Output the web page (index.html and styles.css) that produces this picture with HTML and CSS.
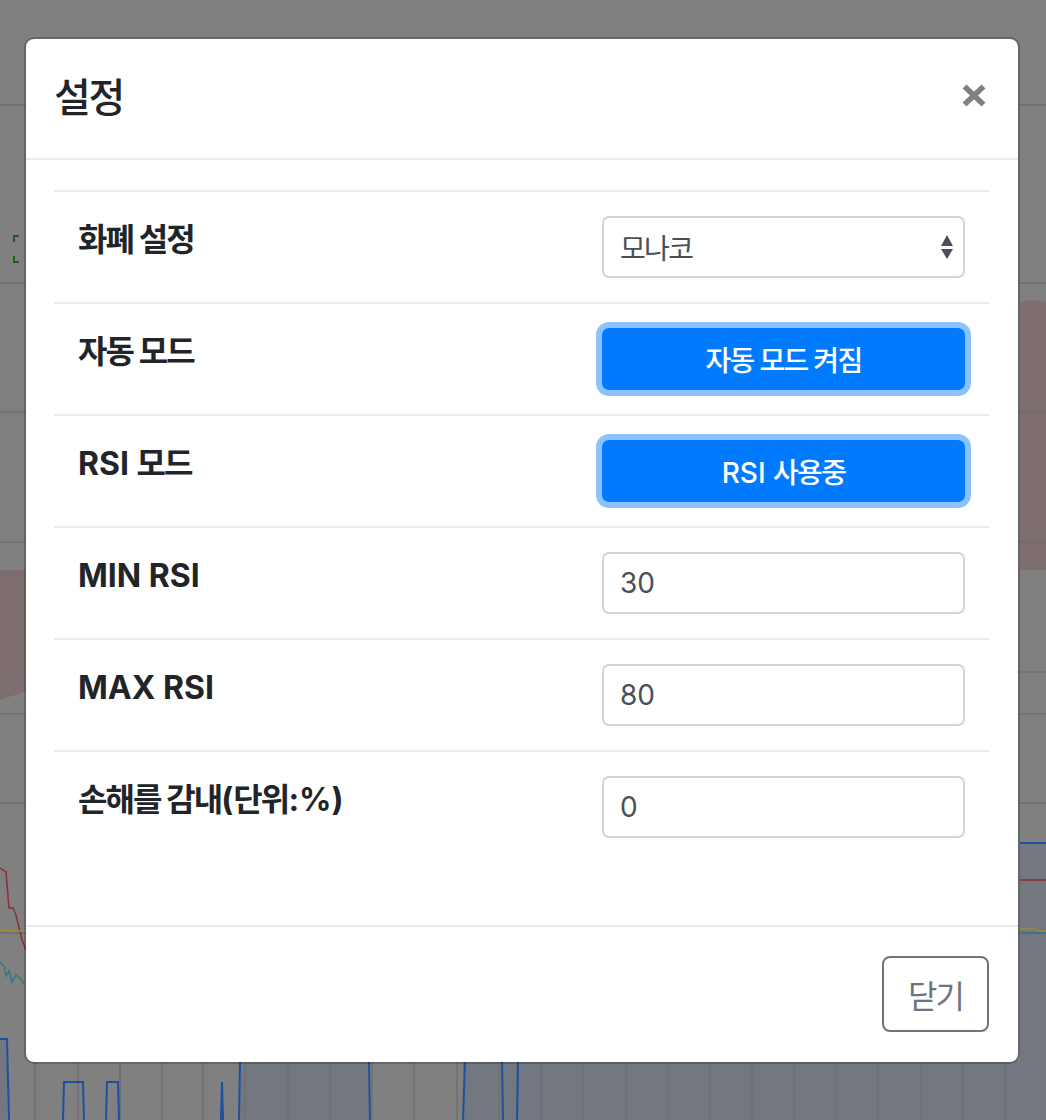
FILE: index.html
```html
<!DOCTYPE html>
<html lang="ko">
<head>
<meta charset="utf-8">
<title>설정</title>
<link rel="stylesheet" href="styles.css">
</head>
<body>
<svg class="chart" width="1046" height="1120" viewBox="0 0 1046 1120" aria-hidden="true">
  <rect x="0" y="0" width="1046" height="1120" fill="#808080"/>
  <path d="M0 570 L1046 570 L1046 302 L1030 300 L1020 302 L1020 570 Z" fill="#7e6e70"/>
  <path d="M0 570 L30 570 L30 690 L0 700 Z" fill="#7e6e70"/>
  <path d="M1020 843 L1046 843 L1046 1120 L1020 1120 Z" fill="#737780"/>
  <path d="M0 1039 L7 1039 L7 1120 L0 1120 Z" fill="#737780"/>
  <path d="M240 1061 L369 1061 L369 1120 L240 1120 Z" fill="#737780"/>
  <path d="M463 1061 L1046 1061 L1046 1120 L463 1120 Z" fill="#737780"/>
  <g stroke="#6f6f6f" stroke-width="1.5">
    <line x1="0" y1="105" x2="1046" y2="105"/>
    <line x1="0" y1="283" x2="1046" y2="283"/>
    <line x1="0" y1="412" x2="1046" y2="412"/>
    <line x1="0" y1="542" x2="1046" y2="542"/>
    <line x1="0" y1="672" x2="1046" y2="672"/>
    <line x1="0" y1="714" x2="1046" y2="714"/>
    <line x1="0" y1="803" x2="1046" y2="803"/>
    <line x1="0" y1="933" x2="1046" y2="933"/>
  </g>
  <g stroke="#6f6f6f" stroke-width="1.5">
    <line x1="35" y1="1061" x2="35" y2="1120"/>
    <line x1="78" y1="1061" x2="78" y2="1120"/>
    <line x1="120" y1="1061" x2="120" y2="1120"/>
    <line x1="162" y1="1061" x2="162" y2="1120"/>
    <line x1="203" y1="1061" x2="203" y2="1120"/>
    <line x1="245" y1="1061" x2="245" y2="1120"/>
    <line x1="288" y1="1061" x2="288" y2="1120"/>
    <line x1="330" y1="1061" x2="330" y2="1120"/>
    <line x1="372" y1="1061" x2="372" y2="1120"/>
    <line x1="414" y1="1061" x2="414" y2="1120"/>
    <line x1="457" y1="1061" x2="457" y2="1120"/>
    <line x1="499" y1="1061" x2="499" y2="1120"/>
    <line x1="541" y1="1061" x2="541" y2="1120"/>
    <line x1="583" y1="1061" x2="583" y2="1120"/>
    <line x1="626" y1="1061" x2="626" y2="1120"/>
    <line x1="668" y1="1061" x2="668" y2="1120"/>
    <line x1="710" y1="1061" x2="710" y2="1120"/>
    <line x1="752" y1="1061" x2="752" y2="1120"/>
    <line x1="794" y1="1061" x2="794" y2="1120"/>
    <line x1="836" y1="1061" x2="836" y2="1120"/>
    <line x1="878" y1="1061" x2="878" y2="1120"/>
    <line x1="921" y1="1061" x2="921" y2="1120"/>
    <line x1="963" y1="1061" x2="963" y2="1120"/>
    <line x1="1005" y1="1061" x2="1005" y2="1120"/>
  </g>
  <path d="M19 236 L14 236 L14 242 M14 256 L14 262 L19 262" fill="none" stroke="#1d5e1d" stroke-width="2"/>
  <polyline points="0,868 6,872 9,908 13,908 16,915 22,940 26,950" fill="none" stroke="#8c2f34" stroke-width="1.5"/>
  <line x1="1020" y1="880" x2="1046" y2="880" stroke="#8c2f34" stroke-width="1.5"/>
  <line x1="0" y1="930" x2="26" y2="931" stroke="#a08a3a" stroke-width="1.5"/>
  <polyline points="1020,929 1036,929 1040,931 1046,931" fill="none" stroke="#a08a3a" stroke-width="1.5"/>
  <line x1="1020" y1="933" x2="1046" y2="933" stroke="#2e7a82" stroke-width="1.5"/>
  <polyline points="0,962 4,966 6,976 9,971 12,982 16,975 20,978 24,984" fill="none" stroke="#2e7a82" stroke-width="1.5"/>
  <line x1="1020" y1="843" x2="1046" y2="843" stroke="#1f4f9e" stroke-width="2"/>
  <g fill="none" stroke="#1f4f9e" stroke-width="2">
    <polyline points="0,1039 7,1039 9,1120"/>
    <polyline points="63,1120 64,1082 83,1082 84,1120"/>
    <polyline points="106,1120 107,1082 118,1082 119,1120"/>
    <polyline points="221,1120 222,1082 223,1120"/>
    <line x1="240" y1="1061" x2="239" y2="1120"/>
    <line x1="369" y1="1061" x2="370" y2="1120"/>
    <line x1="465" y1="1061" x2="463" y2="1120"/>
    <line x1="502" y1="1061" x2="503" y2="1120"/>
    <line x1="518" y1="1061" x2="517" y2="1120"/>
  </g>
</svg>

<div class="modal">
  <div class="modal-header">
    <h5 class="modal-title"><span class="ko">설정</span></h5>
    <button class="close" type="button" aria-label="Close">
      <svg width="24" height="23" viewBox="0 0 24 23"><path d="M2.5 2.5 L21.5 20.5 M21.5 2.5 L2.5 20.5" stroke="#808080" stroke-width="5.6" stroke-linecap="butt"/></svg>
    </button>
  </div>
  <div class="modal-body">
    <table class="settings">
      <tr>
        <th><span class="ko">화폐 설정</span></th>
        <td>
          <div class="select">
            <span class="ko">모나코</span>
            <svg class="arrows" width="12" height="25" viewBox="0 0 12 25"><path d="M6 0 L12 11 L0 11 Z M0 14 L12 14 L6 24 Z" fill="#4a4f55"/></svg>
          </div>
        </td>
      </tr>
      <tr>
        <th><span class="ko">자동 모드</span></th>
        <td><button class="btn-primary" type="button"><span class="ko">자동 모드 켜짐</span></button></td>
      </tr>
      <tr>
        <th>RSI <span class="ko">모드</span></th>
        <td><button class="btn-primary" type="button">RSI <span class="ko">사용중</span></button></td>
      </tr>
      <tr>
        <th>MIN RSI</th>
        <td><input class="field" type="text" value="30"></td>
      </tr>
      <tr>
        <th>MAX RSI</th>
        <td><input class="field" type="text" value="80"></td>
      </tr>
      <tr>
        <th><span class="ko">손해를 감내</span>(<span class="ko">단위</span>:%)</th>
        <td><input class="field" type="text" value="0"></td>
      </tr>
    </table>
  </div>
  <div class="modal-footer">
    <button class="btn-secondary" type="button"><span class="ko">닫기</span></button>
  </div>
</div>
</body>
</html>
```

FILE: styles.css
```css
html, body {
  margin: 0;
  padding: 0;
}
body {
  width: 1046px;
  height: 1120px;
  overflow: hidden;
  position: relative;
  background: #808080;
  font-family: Inter, "Noto Sans CJK KR", sans-serif;
  color: #212529;
}
.ko {
  letter-spacing: -0.06em;
}
.chart {
  position: absolute;
  left: 0;
  top: 0;
}
.modal {
  position: relative;
  box-sizing: border-box;
  width: 996px;
  margin: 37px 0 0 24px;
  background: #fff;
  border: 2px solid rgba(0, 0, 0, 0.2);
  border-radius: 10px;
  background-clip: padding-box;
}
.modal-header {
  display: flex;
  justify-content: space-between;
  align-items: flex-start;
  height: 121px;
  box-sizing: border-box;
  padding: 29px 32px 0 28px;
  border-bottom: 2px solid #e9ecef;
}
.modal-title {
  margin: 0;
  font-size: 40px;
  line-height: 60px;
  font-weight: 500;
  color: #212529;
}
.close {
  margin-top: 16px;
  padding: 0;
  border: 0;
  background: transparent;
  width: 24px;
  height: 23px;
  display: block;
}
.close svg {
  display: block;
}
.modal-body {
  padding: 30px 29px 63px 28px;
}
.settings {
  width: 100%;
  border-collapse: collapse;
}
.settings th,
.settings td {
  border-top: 2px solid #e9ecef;
  padding: 24px;
  vertical-align: top;
  height: 62px;
}
.settings th {
  text-align: left;
  font-size: 32px;
  line-height: 48px;
  font-weight: 700;
  color: #212529;
  width: 476px;
}
.settings td {
  width: 363px;
}
.select {
  box-sizing: border-box;
  height: 62px;
  width: 363px;
  border: 2px solid #ced4da;
  border-radius: 7px;
  display: flex;
  align-items: center;
  justify-content: space-between;
  padding: 0 10px 0 16px;
  font-size: 28px;
  color: #495057;
}
.arrows {
  display: block;
}
.field {
  box-sizing: border-box;
  display: block;
  width: 363px;
  height: 62px;
  margin: 0;
  border: 2px solid #ced4da;
  border-radius: 7px;
  padding: 0 16px;
  font-family: Inter, "Noto Sans CJK KR", sans-serif;
  font-size: 28px;
  color: #495057;
  background: #fff;
  outline: none;
}
.btn-primary {
  box-sizing: border-box;
  display: block;
  width: 363px;
  height: 62px;
  margin: 0;
  border: 2px solid #007bff;
  border-radius: 7px;
  background: #007bff;
  color: #fff;
  font-family: Inter, "Noto Sans CJK KR", sans-serif;
  font-size: 28px;
  font-weight: 500;
  box-shadow: 0 0 0 6px rgba(0, 123, 255, 0.45);
}
.modal-footer {
  display: flex;
  justify-content: flex-end;
  padding: 29px 29px 30px;
  border-top: 2px solid #e9ecef;
}
.btn-secondary {
  box-sizing: border-box;
  height: 76px;
  padding: 0 24px;
  margin: 0;
  border: 2px solid #6c757d;
  border-radius: 8px;
  background: transparent;
  color: #6c757d;
  font-family: Inter, "Noto Sans CJK KR", sans-serif;
  font-size: 32px;
  font-weight: 400;
}
```
